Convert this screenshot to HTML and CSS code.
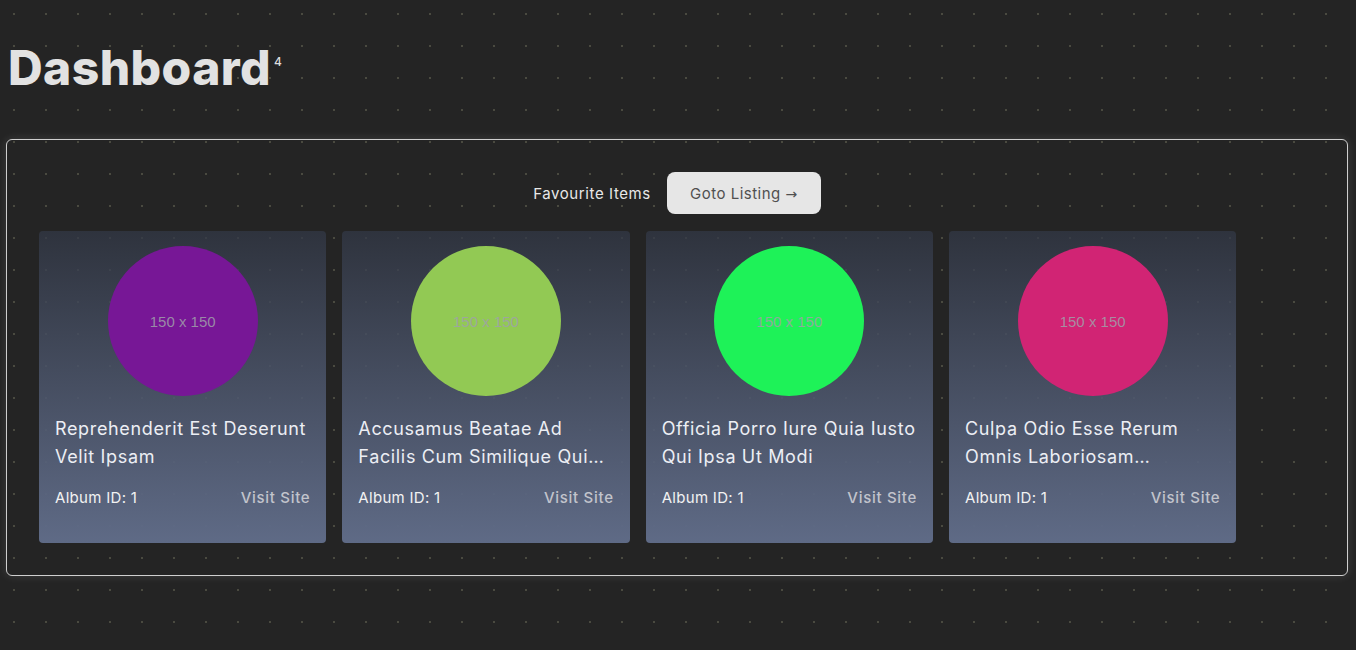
FILE: index.html
```html
<!DOCTYPE html>
<html lang="en">
<head>
<meta charset="utf-8">
<title>Dashboard</title>
<link rel="stylesheet" href="styles.css">
</head>
<body>
<header class="page-head">
  <h1 class="title">Dashboard<sup class="count">4</sup></h1>
</header>
<section class="panel">
  <div class="panel-head">
    <span class="panel-label">Favourite Items</span>
    <button class="goto">Goto Listing <span class="arrow">→</span></button>
  </div>
  <div class="cards">
    <article class="card">
      <div class="thumb" style="background:#771796">150 x 150</div>
      <h2 class="card-title">Reprehenderit Est Deserunt Velit Ipsam</h2>
      <div class="card-foot"><span class="album">Album ID: 1</span><a class="visit">Visit Site</a></div>
    </article>
    <article class="card">
      <div class="thumb" style="background:#92c954">150 x 150</div>
      <h2 class="card-title">Accusamus Beatae Ad Facilis Cum Similique Qui Sint</h2>
      <div class="card-foot"><span class="album">Album ID: 1</span><a class="visit">Visit Site</a></div>
    </article>
    <article class="card">
      <div class="thumb" style="background:#1ef258">150 x 150</div>
      <h2 class="card-title">Officia Porro Iure Quia Iusto Qui Ipsa Ut Modi</h2>
      <div class="card-foot"><span class="album">Album ID: 1</span><a class="visit">Visit Site</a></div>
    </article>
    <article class="card">
      <div class="thumb" style="background:#d12474">150 x 150</div>
      <h2 class="card-title">Culpa Odio Esse Rerum Omnis Laboriosam Consequuntur</h2>
      <div class="card-foot"><span class="album">Album ID: 1</span><a class="visit">Visit Site</a></div>
    </article>
  </div>
</section>
</body>
</html>
```
FILE: styles.css
```css
html, body { height: 100%; }
body {
  margin: 0;
  background-color: #242424;
  background-image: radial-gradient(circle, #4a4a40 0.9px, transparent 1.2px);
  background-size: 32px 32px;
  background-position: -2px -2px;
  font-family: "Inter", "Liberation Sans", sans-serif;
  color: #e6e6e6;
}
.page-head { padding: 38px 8px 0 8px; height: 139px; box-sizing: border-box; }
.title {
  margin: 0;
  font-size: 48px;
  font-weight: 800;
  letter-spacing: 0.4px;
  line-height: 60px;
  color: #e2e2e2;
}
.count {
  font-size: 12px;
  font-weight: 500;
  vertical-align: top;
  position: relative;
  top: -6px;
  margin-left: 3px;
  color: #ddd;
}
.panel {
  margin: 0 8px 0 6px;
  height: 437px;
  box-sizing: border-box;
  border: 1px solid #cfcfcf;
  border-radius: 6px;
  box-shadow: 0 0 10px rgba(255,255,255,0.12);
  padding: 32px 32px 0 32px;
}
.panel-head {
  display: flex;
  align-items: center;
  justify-content: center;
  gap: 16px;
  height: 42px;
  margin-bottom: 17px;
}
.panel-label { font-size: 15px; color: #e8e8e8; letter-spacing: 0.6px; }
.goto {
  font-family: inherit;
  height: 42px;
  width: 154px;
  border: none;
  border-radius: 8px;
  background: #e6e6e6;
  color: #505050;
  font-size: 15px;
  letter-spacing: 0.5px;
  padding: 0;
}
.arrow { font-family: "DejaVu Sans", sans-serif; font-size: 14px; }
.cards { display: flex; gap: 16px; }
.card {
  width: 287.33px;
  height: 312px;
  box-sizing: border-box;
  border-radius: 4px;
  background: linear-gradient(180deg, rgba(50,56,70,0.75) 0%, rgba(96,108,136,0.98) 100%);
  padding: 15px 16px 0 16px;
  display: flex;
  flex-direction: column;
}
.thumb {
  width: 150px;
  height: 150px;
  border-radius: 50%;
  align-self: center;
  display: flex;
  align-items: center;
  justify-content: center;
  font-family: "Liberation Sans", Arial, sans-serif;
  font-size: 15px;
  color: rgba(160,160,170,0.85);
}
.card-title {
  margin: 19px 0 0 0;
  font-size: 18px;
  font-weight: 400;
  letter-spacing: 0.65px;
  line-height: 28px;
  color: #eceef4;
  display: -webkit-box;
  -webkit-line-clamp: 2;
  -webkit-box-orient: vertical;
  overflow: hidden;
}
.card-foot {
  display: flex;
  justify-content: space-between;
  margin-top: 17px;
  font-size: 15px;
  letter-spacing: 0.3px;
}
.album { color: #f2f2f2; }
.visit { color: #c2c4cc; letter-spacing: 0.7px; font-weight: 500; }
```
